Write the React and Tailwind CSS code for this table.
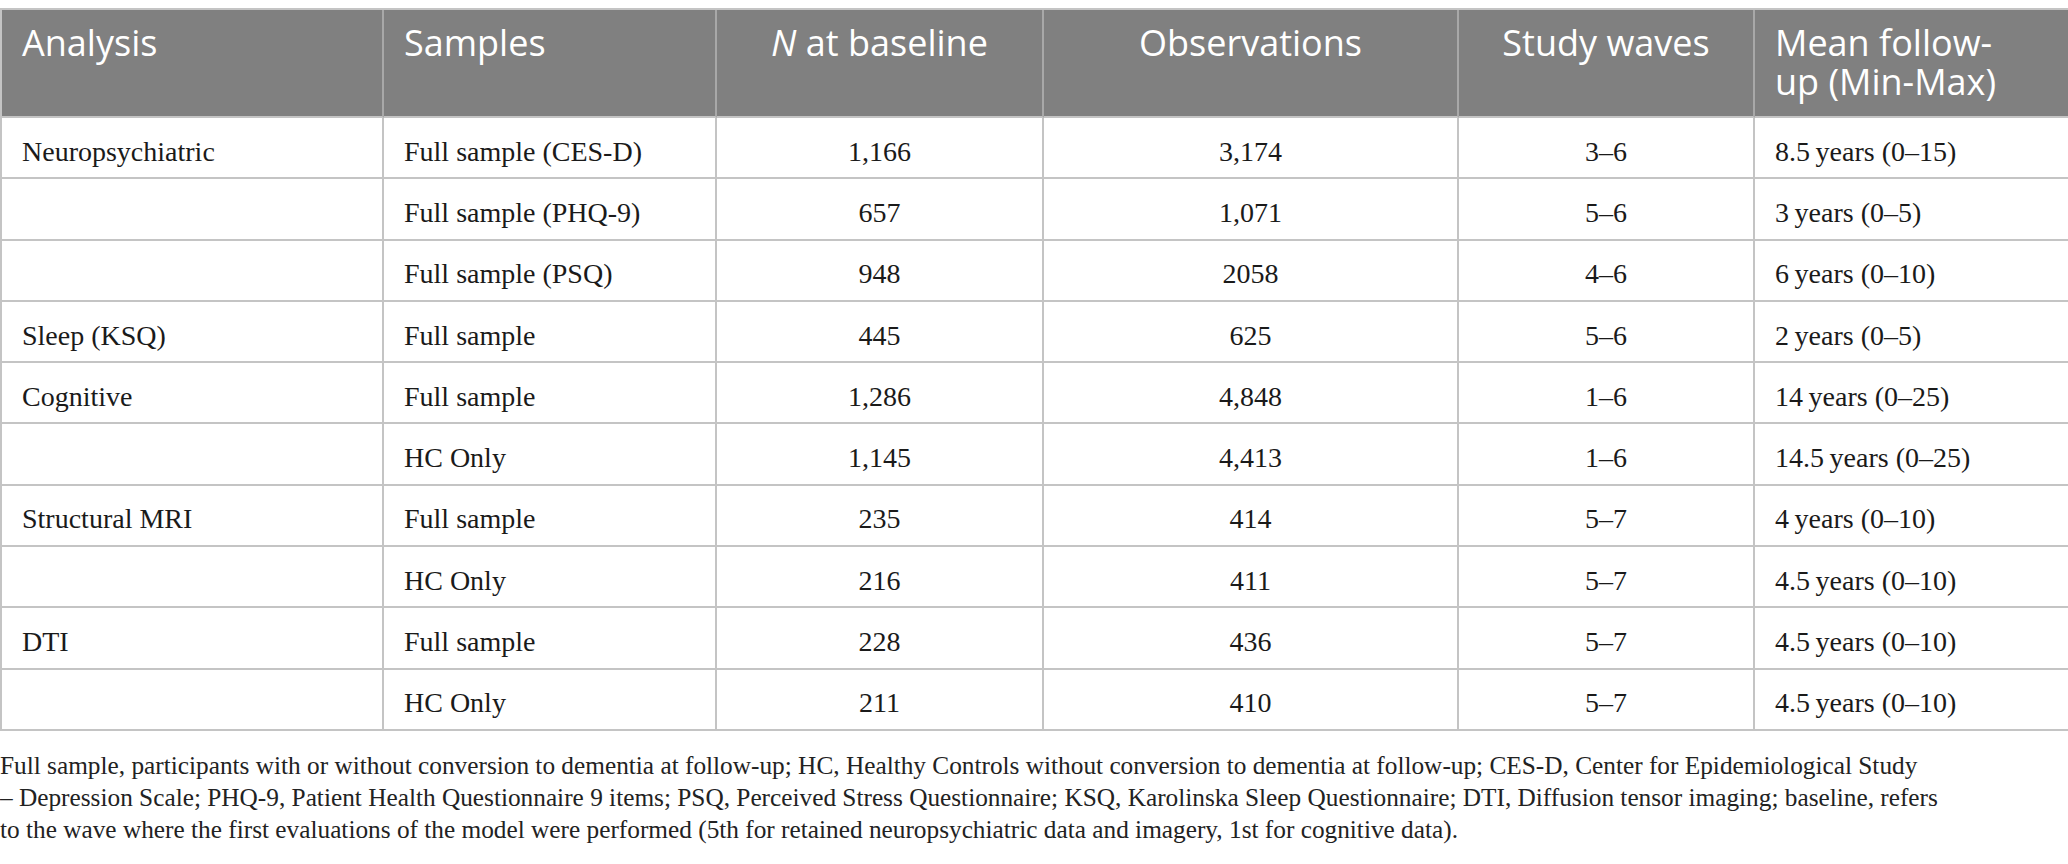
import React from "react";

const rows = [
  ["Neuropsychiatric", "Full sample (CES-D)", "1,166", "3,174", "3–6", "8.5\u2009years (0–15)"],
  ["", "Full sample (PHQ-9)", "657", "1,071", "5–6", "3\u2009years (0–5)"],
  ["", "Full sample (PSQ)", "948", "2058", "4–6", "6\u2009years (0–10)"],
  ["Sleep (KSQ)", "Full sample", "445", "625", "5–6", "2\u2009years (0–5)"],
  ["Cognitive", "Full sample", "1,286", "4,848", "1–6", "14\u2009years (0–25)"],
  ["", "HC Only", "1,145", "4,413", "1–6", "14.5\u2009years (0–25)"],
  ["Structural MRI", "Full sample", "235", "414", "5–7", "4\u2009years (0–10)"],
  ["", "HC Only", "216", "411", "5–7", "4.5\u2009years (0–10)"],
  ["DTI", "Full sample", "228", "436", "5–7", "4.5\u2009years (0–10)"],
  ["", "HC Only", "211", "410", "5–7", "4.5\u2009years (0–10)"],
];

const cellCls = [
  "justify-start pl-5",
  "justify-start pl-5",
  "justify-center",
  "justify-center",
  "justify-center",
  "justify-start pl-5",
];

function Head({ className = "", children }) {
  return (
    <div className={`h-[108px] bg-[#808080] border-r-2 border-b-2 border-r-[#a8a8a8] border-b-[#c4c4c4] pt-[13px] text-white text-[36px] leading-[39px] ${className}`}>
      {children}
    </div>
  );
}

export default function App() {
  return (
    <div className="w-[2068px] bg-white pt-2">
      <div className="grid grid-cols-[382px_333px_327px_415px_296px_315px] border-t-2 border-l-2 border-[#c4c4c4]">
        <div className="contents font-['Open_Sans','Noto_Sans',sans-serif]">
          <Head className="pl-5">Analysis</Head>
          <Head className="pl-5">Samples</Head>
          <Head className="text-center"><i>N</i> at baseline</Head>
          <Head className="text-center">Observations</Head>
          <Head className="text-center">Study waves</Head>
          <Head className="pl-5 border-r-[#c4c4c4]">
            Mean follow-
            <br />
            up (Min-Max)
          </Head>
        </div>
        {rows.map((r, i) =>
          r.map((c, j) => (
            <div
              key={i + "-" + j}
              className={`h-[61.3px] flex items-center pt-2 border-r-2 border-b-2 border-[#c4c4c4] font-['Liberation_Serif','Times_New_Roman',serif] text-[28px] text-[#1a1a1a] ${cellCls[j]}`}
            >
              {c}
            </div>
          ))
        )}
      </div>
      <div className="pt-[18px] font-['Liberation_Serif','Times_New_Roman',serif] text-[25.3px] leading-[32px] text-[#222]">
        Full sample, participants with or without conversion to dementia at follow-up; HC, Healthy Controls without conversion to dementia at follow-up; CES-D, Center for Epidemiological Study
        <br />– Depression Scale; PHQ-9, Patient Health Questionnaire 9 items; PSQ, Perceived Stress Questionnaire; KSQ, Karolinska Sleep Questionnaire; DTI, Diffusion tensor imaging; baseline, refers
        <br />to the wave where the first evaluations of the model were performed (5th for retained neuropsychiatric data and imagery, 1st for cognitive data).
      </div>
    </div>
  );
}
